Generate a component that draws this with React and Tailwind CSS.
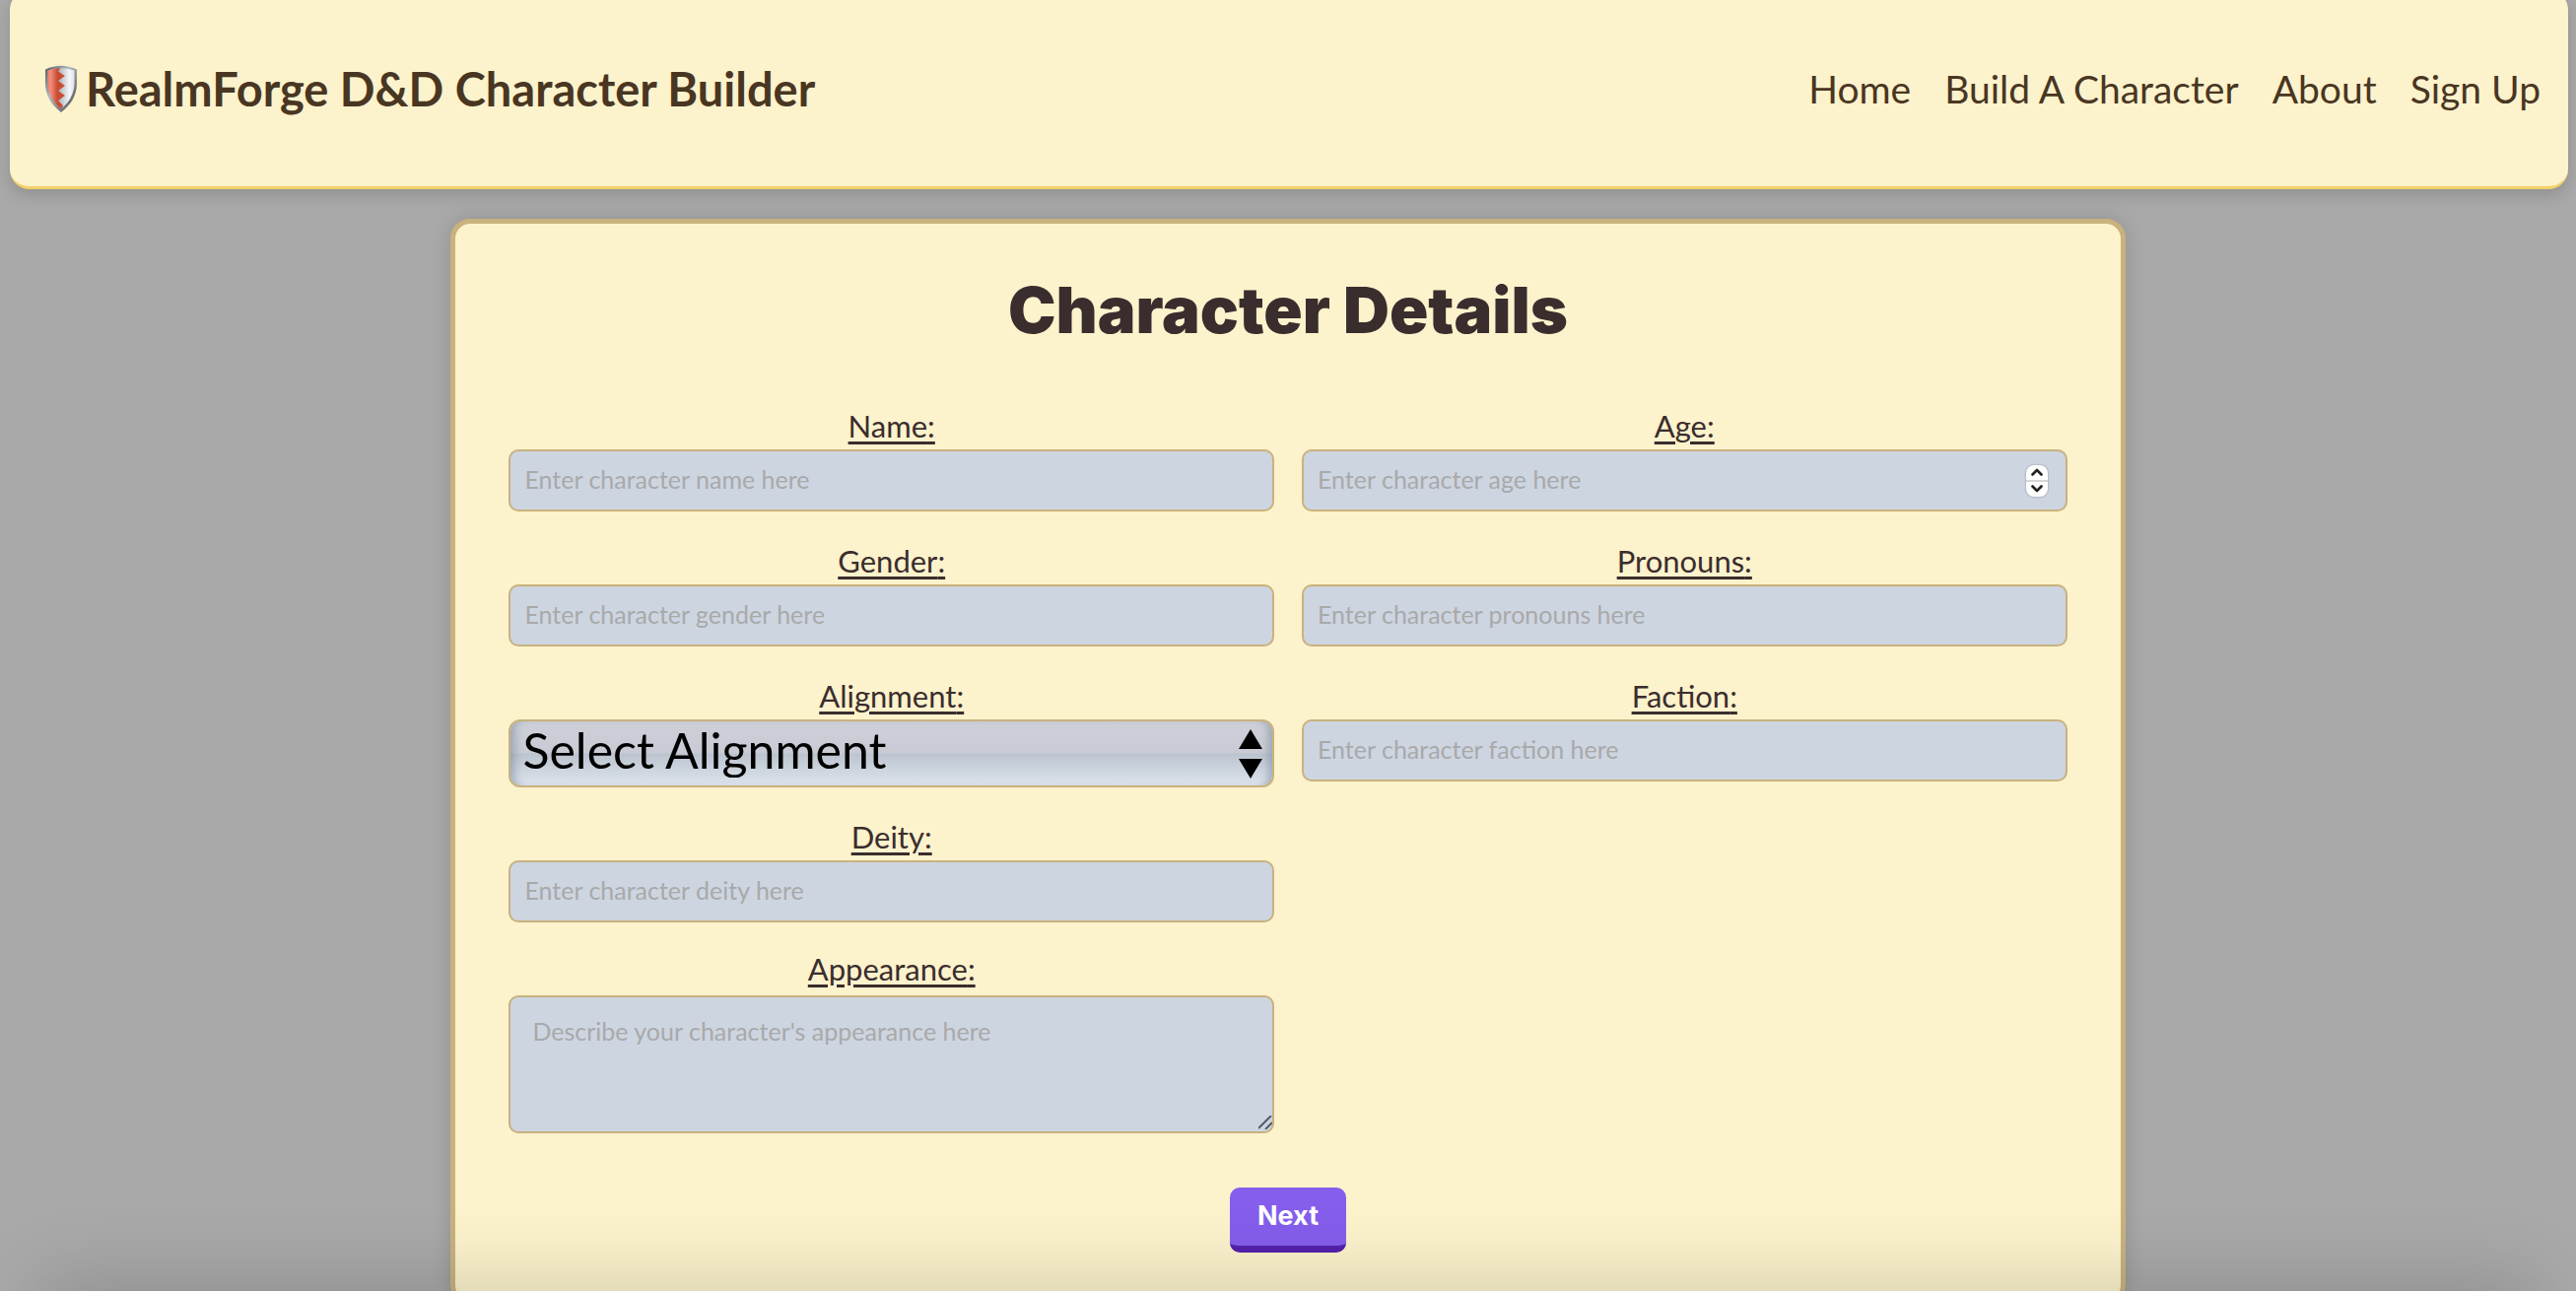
const fieldBox =
  "h-[63px] w-full rounded-[10px] border-2 border-[#c8b27e] bg-[#cdd5e1] px-3.5 pb-1 text-[25px] text-[#3a2d2d] placeholder:text-[#a9a9a9]";

function Field({ id, label, children, labelLeading = "leading-[37px]" }) {
  return (
    <div className="flex flex-col">
      <label
        htmlFor={id}
        className={`h-[42px] text-center text-[31px] underline decoration-[3px] underline-offset-[4px] ${labelLeading}`}
      >
        {label}:
      </label>
      {children}
    </div>
  );
}

function TextField({ id, label }) {
  return (
    <Field id={id} label={label}>
      <input id={id} type="text" placeholder={`Enter character ${id} here`} className={fieldBox} />
    </Field>
  );
}

function Shield() {
  return (
    <svg viewBox="0 0 34 48" className="h-12 w-[34px] shrink-0" aria-hidden="true">
      <defs>
        <linearGradient id="rim" x1="0" x2="1" y1="0" y2="1">
          <stop offset="0" stopColor="#555a5e" />
          <stop offset="0.4" stopColor="#b4b9bd" />
          <stop offset="1" stopColor="#3e4348" />
        </linearGradient>
        <linearGradient id="red" x1="0" x2="1">
          <stop offset="0" stopColor="#dc604c" />
          <stop offset="0.3" stopColor="#f48f7c" />
          <stop offset="0.65" stopColor="#c6492f" />
          <stop offset="1" stopColor="#cf5338" />
        </linearGradient>
        <linearGradient id="silver" x1="0" x2="1">
          <stop offset="0" stopColor="#9a9ea3" />
          <stop offset="0.45" stopColor="#b2b6ba" />
          <stop offset="0.75" stopColor="#f5f6fa" />
          <stop offset="1" stopColor="#cfd2dc" />
        </linearGradient>
        <clipPath id="face">
          <path d="M3.5 5.5Q17 .5 30.500 5.500V18C30.500 29 25 38 17 44.500C9 38 3.500 29 3.500 18Z" />
        </clipPath>
      </defs>
      <path d="M1 4.500Q17 -3 33 4.500V18C33 31 27 40 17 48C7 40 1 31 1 18Z" fill="url(#rim)" />
      <g clipPath="url(#face)">
        <rect width="34" height="48" fill="url(#silver)" />
        <path
          d="M0 0H18L14 6.500L21 11L14 16L21 21L14 26L21 31L14 36L19 41L16 48H0Z"
          fill="url(#red)"
        />
      </g>
    </svg>
  );
}

const links = ["Home", "Build A Character", "About", "Sign Up"];

export default function App() {
  return (
    <div className="h-screen overflow-y-auto bg-[#a9a9a9] font-['Lato',sans-serif] text-[#3a2d2d] [scrollbar-width:none]">
      <div className="overflow-hidden">
        <header className="mr-2 ml-2.5 -mt-2.5 mb-[30px] flex h-[202px] items-center justify-between rounded-[20px] border-b-[3px] border-[#f2d068] bg-[#fcf2cc] pr-7 pl-[35px] text-[#493622] shadow-[0_6px_16px_rgba(0,0,0,0.15)]">
          <h1 className="flex items-center gap-2 text-[47px] leading-[60px] font-bold">
            <Shield />
            RealmForge D&amp;D Character Builder
          </h1>
          <nav className="flex gap-[34px] text-[39px] leading-[60px]">
            {links.map((link) => (
              <a key={link} href="#">
                {link}
              </a>
            ))}
          </nav>
        </header>

        <main className="mx-auto w-[65%] rounded-[20px] border-[5px] border-[#c8b27e] bg-[#fcf2cc] px-[54px] pb-12 shadow-[0_0_20px_rgba(0,0,0,0.15)]">
          <h2 className="pt-12 pb-[59px] text-center font-['Inter',sans-serif] text-[65px] leading-[80px] font-black">
            Character Details
          </h2>

          <form onSubmit={(e) => e.preventDefault()}>
            <div className="grid grid-cols-2 gap-x-7 gap-y-8">
              <TextField id="name" label="Name" />
              <Field id="age" label="Age">
                <div className="relative">
                  <input
                    id="age"
                    type="number"
                    placeholder="Enter character age here"
                    className={`${fieldBox} block [appearance:textfield]`}
                  />
                  <div className="absolute inset-y-0 right-5 flex items-center">
                    <div className="flex h-8 w-[22px] flex-col divide-y-2 divide-[#d6d6d6] overflow-hidden rounded-lg bg-white shadow-[0_0_2px_rgba(0,0,0,0.4)]">
                      <button type="button" aria-label="Increase age" className="flex flex-1 items-center justify-center">
                        <svg viewBox="0 0 12 8" className="h-2 w-3" fill="none" stroke="#222" strokeWidth="2.6" strokeLinecap="round" strokeLinejoin="round">
                          <path d="M1.500 6.500L6 2L10.500 6.500" />
                        </svg>
                      </button>
                      <button type="button" aria-label="Decrease age" className="flex flex-1 items-center justify-center">
                        <svg viewBox="0 0 12 8" className="h-2 w-3" fill="none" stroke="#222" strokeWidth="2.6" strokeLinecap="round" strokeLinejoin="round">
                          <path d="M1.500 1.500L6 6L10.500 1.500" />
                        </svg>
                      </button>
                    </div>
                  </div>
                </div>
              </Field>
              <TextField id="gender" label="Gender" />
              <TextField id="pronouns" label="Pronouns" />
              <Field id="alignment" label="Alignment">
                <div className="relative">
                  <select
                    id="alignment"
                    className="block h-[69px] w-full appearance-none rounded-[12px] border-2 border-[#c8b27e] bg-[linear-gradient(to_bottom,#cdd0d8,#c8cbd4_49%,#bcc4cf_51%,#ccd4de_75%,#dce3eb)] pr-12 pb-2 pl-3 text-[50px] leading-[56px] text-black shadow-[inset_10px_0_8px_-6px_rgba(90,105,130,0.4),inset_-10px_0_8px_-6px_rgba(90,105,130,0.4)]"
                  >
                    <option>Select Alignment</option>
                  </select>
                  <svg viewBox="0 0 24 50" className="pointer-events-none absolute top-2.5 right-3 h-[50px] w-6" aria-hidden="true">
                    <path d="M12 0L24 20H0ZM0 30H24L12 50Z" />
                  </svg>
                </div>
              </Field>
              <TextField id="faction" label="Faction" />
              <TextField id="deity" label="Deity" />
              <div className="col-start-1">
                <Field id="appearance" label="Appearance" labelLeading="leading-[30px]">
                  <div className="relative">
                    <textarea
                      id="appearance"
                      placeholder="Describe your character's appearance here"
                      className="block h-[140px] w-full rounded-[10px] border-2 border-[#c8b27e] bg-[#cdd5e1] px-[22px] py-4 text-[25px] leading-9 placeholder:text-[#a9a9a9] [&::-webkit-resizer]:hidden"
                    />
                    <svg viewBox="0 0 14 14" className="pointer-events-none absolute right-0.5 bottom-1 size-3.5" fill="none" stroke="#555b66" strokeWidth="2" aria-hidden="true">
                      <path d="M0 13L13 0M7 14L14 7" />
                    </svg>
                  </div>
                </Field>
              </div>
            </div>
            <div className="mt-[55px] flex justify-center">
              <button
                type="submit"
                className="h-[66px] w-[118px] rounded-[10px] border-b-[7px] border-[#5421ab] bg-[#855eec] font-['Inter',sans-serif] text-[27px] font-bold text-white"
              >
                Next
              </button>
            </div>
          </form>
        </main>
      </div>
      <div className="pointer-events-none fixed inset-x-12 top-full h-20 shadow-[0_0_80px_10px_rgba(0,0,0,0.16)]" />
    </div>
  );
}
